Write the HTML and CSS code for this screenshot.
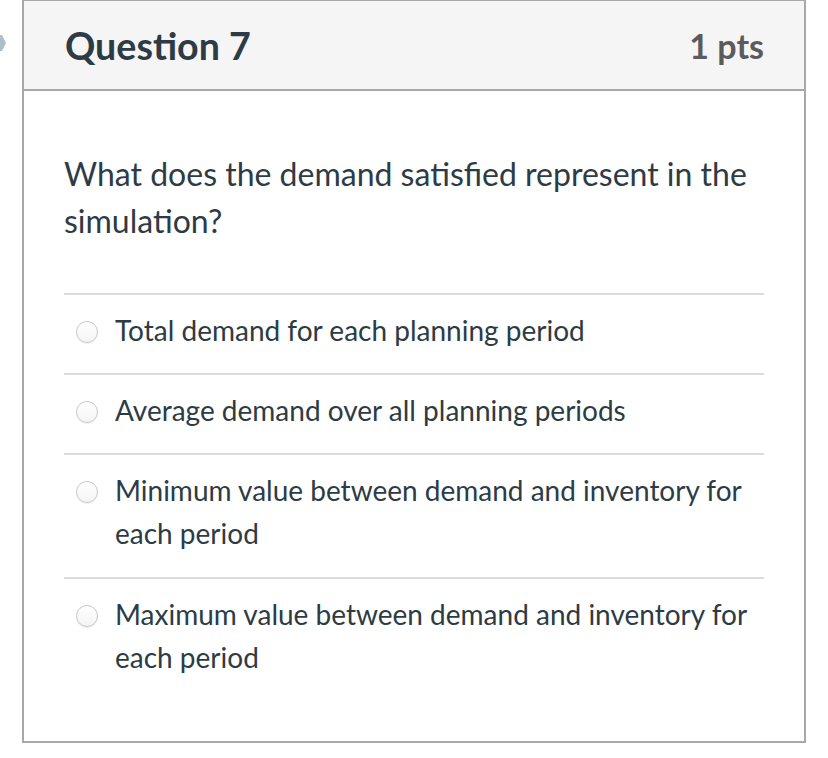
FILE: index.html
```html
<!DOCTYPE html>
<html>
<head>
<meta charset="utf-8">
<link rel="stylesheet" href="styles.css">
</head>
<body>
<svg class="flag" width="8" height="20" viewBox="0 0 8 20"><path d="M-4 2 L2 2 L6 10 L2 18 L-4 18 Z" fill="#aebfcc"/></svg>
<div class="card">
  <div class="header">
    <h2 class="title">Question 7</h2>
    <span class="pts">1 pts</span>
  </div>
  <div class="body">
    <p class="question">What does the demand satisfied represent in the simulation?</p>
    <div class="answers">
      <label class="answer"><span class="radio"></span><span class="text">Total demand for each planning period</span></label>
      <label class="answer"><span class="radio"></span><span class="text">Average demand over all planning periods</span></label>
      <label class="answer multi"><span class="radio"></span><span class="text">Minimum value between demand and inventory for each period</span></label>
      <label class="answer multi"><span class="radio"></span><span class="text">Maximum value between demand and inventory for each period</span></label>
    </div>
  </div>
</div>
</body>
</html>
```

FILE: styles.css
```css
html, body {
  margin: 0;
  padding: 0;
  background: #ffffff;
}
body {
  font-family: Lato, "Noto Sans", sans-serif;
  color: #2d3b45;
  position: relative;
}
.flag {
  position: absolute;
  left: 0;
  top: 33px;
}
.card {
  box-sizing: border-box;
  width: 784px;
  margin-left: 22px;
  border: 2px solid #a8a8a8;
  border-top-width: 1px;
  background: #fff;
}
.header {
  box-sizing: border-box;
  height: 90px;
  background: #f5f5f5;
  border-bottom: 2px solid #a8a8a8;
  display: flex;
  align-items: center;
  justify-content: space-between;
  padding: 0 40px 0 41px;
}
.title {
  margin: 0;
  font-size: 37.6px;
  font-weight: 700;
  color: #2d3b45;
}
.pts {
  font-size: 34px;
  font-weight: 700;
  color: #5b5b5b;
}
.body {
  padding: 59px 40px 44px 40px;
}
.question {
  margin: 0 0 49px 0;
  font-size: 32px;
  line-height: 47px;
}
.answers {
  display: flex;
  flex-direction: column;
}
.answer {
  display: flex;
  align-items: flex-start;
  border-top: 2px solid #dcdcdc;
  padding: 14px 0 21px 0;
  font-size: 28px;
  line-height: 43px;
}
.answer.multi {
  padding-bottom: 22px;
}
.answer:last-child {
  padding-bottom: 18px;
}
.radio {
  flex: none;
  box-sizing: border-box;
  width: 22px;
  height: 22px;
  border-radius: 50%;
  border: 1px solid #c8c8c8;
  background: linear-gradient(#ffffff, #f4f4f4);
  box-shadow: 0 1px 1px rgba(0,0,0,0.07);
  margin: 12px 17px 0 12px;
}
.text {
  flex: 1;
}
```
